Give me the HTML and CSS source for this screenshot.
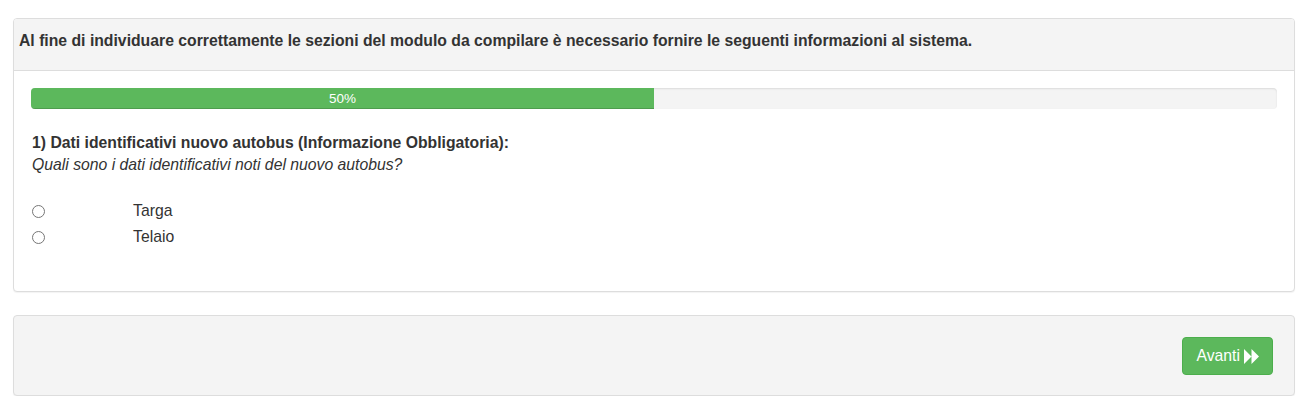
FILE: index.html
```html
<!DOCTYPE html>
<html lang="it">
<head>
<meta charset="utf-8">
<title>Modulo</title>
<link rel="stylesheet" href="styles.css">
</head>
<body>
<div class="page">
  <div class="panel">
    <div class="panel-heading">Al fine di individuare correttamente le sezioni del modulo da compilare è necessario fornire le seguenti informazioni al sistema.</div>
    <div class="panel-body">
      <div class="progress"><div class="progress-bar" style="width:50%">50%</div></div>
      <div class="question">
        <div class="q-title">1) Dati identificativi nuovo autobus (Informazione Obbligatoria):</div>
        <div class="q-sub">Quali sono i dati identificativi noti del nuovo autobus?</div>
      </div>
      <div class="options">
        <label class="option"><span class="radio"></span><span class="opt-label">Targa</span></label>
        <label class="option"><span class="radio"></span><span class="opt-label">Telaio</span></label>
      </div>
    </div>
  </div>
  <div class="panel footer-panel">
    <button class="btn-next">Avanti <svg class="fwd" viewBox="0 0 14 14" width="15" height="15"><path d="M0 0 L7 7 L0 14 Z M7 0 L14 7 L7 14 Z" fill="#fff"/></svg></button>
  </div>
</div>
</body>
</html>
```

FILE: styles.css
```css
* { box-sizing: border-box; }
html, body { margin: 0; padding: 0; background: #fff; }
body {
  font-family: "Liberation Sans", Arial, sans-serif;
  font-size: 15.75px;
  line-height: 20px;
  color: #333;
}
.page {
  padding: 18px 10px 0 13px;
}
.panel {
  border: 1px solid #ddd;
  border-radius: 4px;
  background: #fff;
  box-shadow: 0 1px 1px rgba(0,0,0,0.05);
  margin-bottom: 23px;
}
.panel-heading {
  background: #f4f4f4;
  border-bottom: 1px solid #ddd;
  border-radius: 3px 3px 0 0;
  padding: 12px 5px 19px 5px;
  font-weight: bold;
  color: #333;
}
.panel-body {
  padding: 17px 17px 44px 17px;
}
.progress {
  height: 21px;
  background: #f4f4f4;
  border-radius: 4px;
  box-shadow: inset 0 1px 2px rgba(0,0,0,0.1);
  overflow: hidden;
  display: flex;
}
.progress-bar {
  background: #5cb85c;
  color: #fff;
  font-size: 13.5px;
  line-height: 21px;
  text-align: center;
  box-shadow: inset 0 -1px 0 rgba(0,0,0,0.15);
}
.question {
  margin-top: 23px;
  padding-left: 1px;
}
.q-title { font-weight: bold; line-height: 22px; }
.q-sub { font-style: italic; line-height: 22px; }
.options {
  margin-top: 25px;
  display: flex;
  flex-direction: column;
  gap: 6px;
}
.option {
  display: flex;
  align-items: center;
  height: 20px;
  font-size: 15.75px;
}
.radio {
  width: 13px;
  height: 13px;
  border: 1px solid #767676;
  border-radius: 50%;
  margin-left: 1px;
  background: #fff;
  flex: none;
}
.opt-label {
  margin-left: 88px;
}
.footer-panel {
  background: #f4f4f4;
  display: flex;
  justify-content: flex-end;
  padding: 21px 21px 20px 0;
  margin-bottom: 0;
}
.btn-next {
  background: #5cb85c;
  border: 1px solid #4cae4c;
  border-radius: 4px;
  color: #fff;
  font-family: "Liberation Sans", Arial, sans-serif;
  font-size: 15.75px;
  height: 38px;
  padding: 0 13px 0 14px;
  display: flex;
  align-items: center;
  gap: 4px;
  cursor: pointer;
}
.fwd { display: block; }
```
